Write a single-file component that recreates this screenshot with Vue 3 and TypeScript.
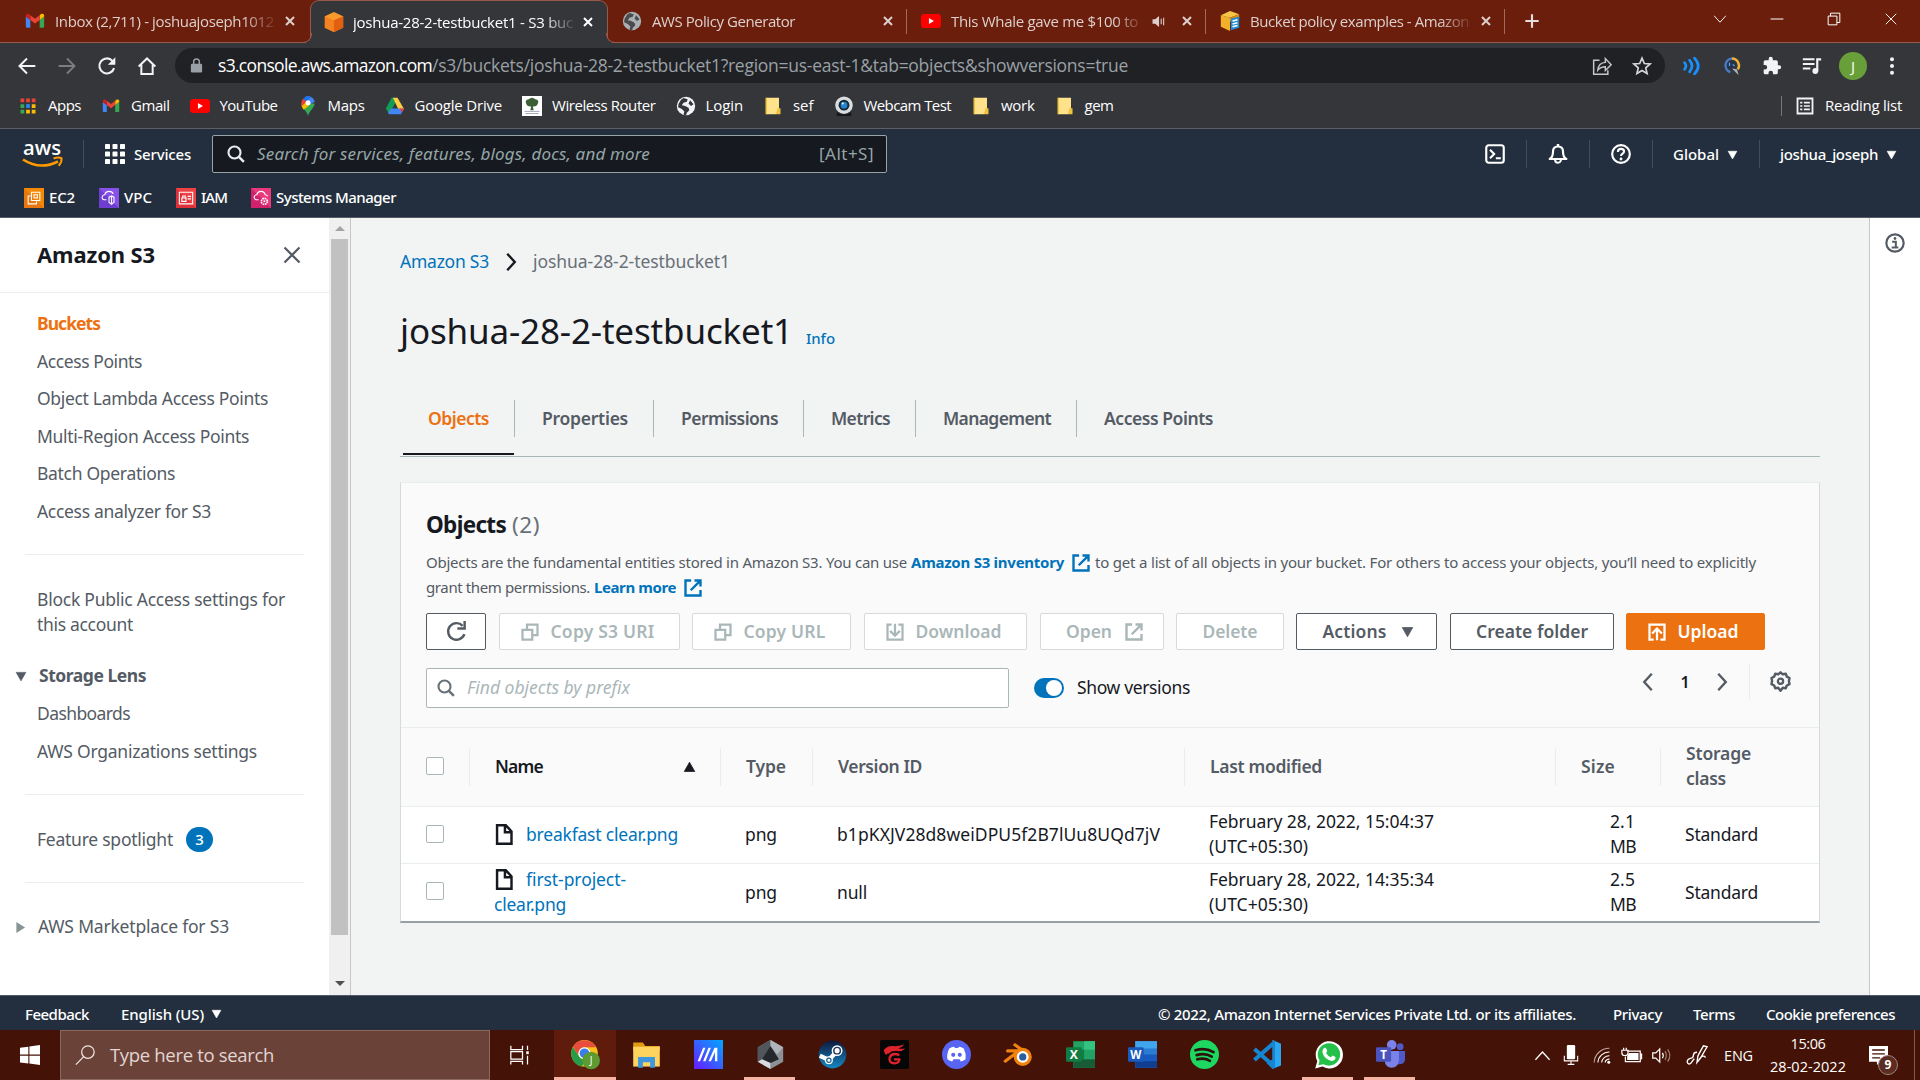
<script setup lang="ts">
import type { Directive } from 'vue'

/* Tracks a label so that it occupies the given width in pixels. */
const vFit: Directive<HTMLElement, number> = {
  mounted(el, { value }) {
    const natural = el.getBoundingClientRect().width
    const count = (el.textContent ?? '').length || 1
    el.style.letterSpacing = `${(value - natural) / count}px`
  },
}

interface Label {
  text: string
  w: number
}
interface IconLabel extends Label {
  icon: string
}

const gmail =
  '<path fill="#4285f4" d="M2 20h4.4V10.500L1 6.500V18.600Q1 20 2 20z"/><path fill="#34a853" d="M17.600 20H22q1-.2 1-1.400V6.500l-5.400 4z"/><path fill="#fbbc04" d="M17.600 5v5.800L23 6.700V5.500c0-2-2.200-2.900-3.700-1.800z"/><path fill="#ea4335" d="M6.400 10.800V5L12 9.200 17.600 5v5.800L12 15z"/><path fill="#c5221f" d="M1 5.500v1.200l5.400 4.100V5L4.700 3.700C3.200 2.600 1 3.500 1 5.500z"/>'
const youtube =
  '<rect x="0" y="3.500" width="24" height="17" rx="4" fill="#f00"/><path d="M9.500 8.500v7l6-3.500z" fill="#fff"/>'
const globe = (c: string, land: string) =>
  `<circle cx="12" cy="12" r="11" fill="${c}"/><path fill="${land}" d="M9 2.500l5 1.500-1 3-4 1-2 3 4 1 4 2 1 3-3 3-1 3.500-3-1 1-4-3-3-4.500-2 .5-4 3-5zM17 5l4 5-3 2-3-3z"/>`
const folder =
  '<path fill="#ffe28a" d="M3 1h17v19l-4 3H3z"/><path fill="#f0c33c" d="M2 1h2v22H2zM18 15h4v8h-6z"/>'

const icons: Record<string, string> = {
  gmail,
  youtube,
  folder,
  globeGrey: globe('#a9b0b5', '#4c4a4b'),
  globeWhite: globe('#f1f3f4', '#35363a'),
  cube: '<path fill="#fa9a2d" d="M12 0l11 5v14l-11 5-11-5V5z"/><path fill="#f58220" d="M1 5l11 5v14L1 19z"/><path fill="#e05f10" d="M23 5l-11 5v14l11-5z"/>',
  docs: '<path fill="#f3b02a" d="M1 5l11 3v16L1 19z"/><path fill="#f8c646" d="M12 0l11 4-11 4L1 5z"/><path fill="#d98b13" d="M12 8l11-4v5l-11 4z"/><path fill="#1d8ed6" d="M13 9l10-2v13l-10 3z"/><path d="M15 12l6-1.500M15 15.500l6-1.500M15 19l6-1.500" stroke="#fff" stroke-width="1.800"/>',
  x: '<path d="M4 4l16 16M20 4L4 20" stroke="currentColor" stroke-width="4" fill="none"/>',
  thinX: '<path d="M3 3l18 18M21 3L3 21" stroke="currentColor" stroke-width="1.600" fill="none"/>',
  sideX: '<path d="M2 2l20 20M22 2L2 22" stroke="#545b64" stroke-width="3" fill="none"/>',
  speaker: '<path fill="#ddd0cd" d="M1 8h5l7-6v20l-7-6H1z"/><path d="M17 7v10M21.500 5v14" stroke="#ddd0cd" stroke-width="2"/>',
  plus: '<path d="M12 2v20M2 12h20" stroke="#e7dedb" stroke-width="3.200"/>',
  down: '<path d="M2 6.500l10 11 10-11" stroke="currentColor" stroke-width="1.600" fill="none"/>',
  minus: '<path d="M1 12h22" stroke="#fff" stroke-width="1.700"/>',
  restore: '<path d="M2 7h15v15H2zM6 7V2h16v16h-5" stroke="#fff" stroke-width="1.700" fill="none"/>',
  back: '<path d="M22 12H3M12 3l-9 9 9 9" stroke="#f1f3f4" stroke-width="2.400" fill="none"/>',
  forward: '<path d="M2 12h19M12 3l9 9-9 9" stroke="#7d7e81" stroke-width="2.200" fill="none"/>',
  reload: '<path d="M20.500 14.500A9 9 0 1 1 18.500 5.800" stroke="#f1f3f4" stroke-width="2.500" fill="none"/><path d="M22 1.500v9h-9z" fill="#f1f3f4"/>',
  home: '<path d="M2 12.500L12 3l10 9.500M5.200 10.500v11h13.600v-11" stroke="#f1f3f4" stroke-width="2.400" fill="none"/>',
  lock: '<rect x="3" y="9" width="18" height="14" rx="2" fill="#9aa0a6"/><path d="M7.500 10V6a4.500 4.500 0 0 1 9 0v4" stroke="#9aa0a6" stroke-width="2.400" fill="none"/>',
  share: '<path d="M9 5H2v17h17v-5" stroke="#c4c7ca" stroke-width="1.800" fill="none"/><path d="M7 17c.5-6 4-9 9-9.300V3l7 7.500-7 7v-4.700c-4 0-6.500 1-9 4.200z" stroke="#c4c7ca" stroke-width="1.700" fill="none"/>',
  star: '<path d="M12 2.500l2.800 6.500 7 .6-5.300 4.600 1.600 6.900L12 17.400l-6.100 3.700 1.600-6.900-5.300-4.600 7-.6z" stroke="#d5d7da" stroke-width="2" fill="none"/>',
  waves: '<path d="M3 8q3.500 4 0 8M9 5q6 7 0 14M15 2.500q9 9.500 0 19" stroke="#1a90ff" stroke-width="3.200" fill="none" stroke-linecap="round"/>',
  quill: '<path d="M12 3a8.500 8.500 0 0 0-2 16.500" stroke="#4779c4" stroke-width="3" fill="none"/><path d="M12 3a8.500 8.500 0 0 1 7 13" stroke="#f0b236" stroke-width="3" fill="none"/><circle cx="11.500" cy="11" r="5.500" fill="#263449"/><path d="M9 8v4M13 10l2 2" stroke="#5aa2ff" stroke-width="1.500"/><path d="M12 15l8 8-2-7z" fill="#a9b0b5"/>',
  puzzle: '<path fill="#f1f3f4" d="M20.500 11H19V7a2 2 0 0 0-2-2h-4V3.500a2.500 2.500 0 0 0-5 0V5H4a2 2 0 0 0-2 2v3.800h1.500a2.700 2.700 0 0 1 0 5.400H2V20a2 2 0 0 0 2 2h3.800v-1.500a2.700 2.700 0 0 1 5.400 0V22H17a2 2 0 0 0 2-2v-4h1.500a2.500 2.500 0 0 0 0-5z"/>',
  playlist: '<path d="M1 4h14M1 9.500h14M1 15h9" stroke="#f1f3f4" stroke-width="2.400"/><circle cx="16" cy="18" r="3.500" fill="#f1f3f4"/><path d="M18.300 18V4H23" stroke="#f1f3f4" stroke-width="2.600" fill="none"/>',
  dots: '<circle cx="12" cy="4" r="2.400" fill="#f1f3f4"/><circle cx="12" cy="12" r="2.400" fill="#f1f3f4"/><circle cx="12" cy="20" r="2.400" fill="#f1f3f4"/>',
  apps: '<path fill="#ea4335" d="M2 2h5v5H2zM9.500 2h5v5h-5zM17 2h5v5h-5z"/><path fill="#34a853" d="M2 9.500h5v5H2zM2 17h5v5H2z"/><path fill="#2f87f5" d="M9.500 9.500h5v5h-5z"/><path fill="#fbbc04" d="M17 9.500h5v5h-5zM9.500 17h5v5h-5zM17 17h5v5h-5z"/>',
  maps: '<path fill="#34a853" d="M12 24C11 18 4.500 15 4 9h16c-.5 6-7 9-8 15z"/><path fill="#fbbc04" d="M4.300 11L9 6l6 4-8 6.500C5.500 14.800 4.500 13 4.300 11z"/><path fill="#4285f4" d="M9 .8C14-1 19 2 20 7l-7 4-3-5z"/><path fill="#1a73e8" d="M9 .8C12 0 14 0 15.500 1L10 7 6 3.500z"/><path fill="#ea4335" d="M6 3.300L10.500 7 4.500 12C3.500 9 4 5.500 6 3.300z"/><circle cx="12" cy="8" r="3" fill="#fff"/>',
  drive: '<path fill="#0f9d58" d="M8 2h4l2 3.500-9 16L1 15z"/><path fill="#ffcd40" d="M9.500 2H15l8 14h-7z"/><path fill="#4285f4" d="M7.500 15H23l-4 7H5l-1.500-2z"/><path fill="#ea4335" d="M17 15h6l-2.500 4.500z"/>',
  tree: '<path fill="#fff" d="M0 0h24v24H0z"/><path fill="#3d5f34" d="M5 9q-2-4 3-5 4-4 8 0 5 1 3 5-1 4-6 3.500l1 4.500h-4l1-4.500Q6 13 5 9z"/><path d="M3 18.500h18M4 21h16" stroke="#aab" stroke-width="1.200"/>',
  webcam: '<path fill="#17191b" d="M3 20h18v4H3z"/><circle cx="12" cy="11" r="10.500" fill="#d9dde0"/><circle cx="12" cy="11" r="6.500" fill="#1a2733"/><circle cx="12" cy="11" r="4" fill="#2186cf"/><circle cx="10.500" cy="9" r="1.200" fill="#fff"/>',
  reading: '<path d="M2 2h20v20H2z" stroke="#f1f3f4" stroke-width="2.400" fill="none"/><path d="M5.500 7.500h3M5.500 12h3M5.500 16.500h3M10.500 7.500h8M10.500 12h8M10.500 16.500h8" stroke="#f1f3f4" stroke-width="2.200"/>',
  grid: '<path fill="#fff" d="M1 0h4q1 0 1 1v4q0 1-1 1H1Q0 6 0 5V1q0-1 1-1zM10 0h4q1 0 1 1v4q0 1-1 1h-4q-1 0-1-1V1q0-1 1-1zM19 0h4q1 0 1 1v4q0 1-1 1h-4q-1 0-1-1V1q0-1 1-1zM1 9h4q1 0 1 1v4q0 1-1 1H1q-1 0-1-1v-4q0-1 1-1zM10 9h4q1 0 1 1v4q0 1-1 1h-4q-1 0-1-1v-4q0-1 1-1zM19 9h4q1 0 1 1v4q0 1-1 1h-4q-1 0-1-1v-4q0-1 1-1zM1 18h4q1 0 1 1v4q0 1-1 1H1q-1 0-1-1v-4q0-1 1-1zM10 18h4q1 0 1 1v4q0 1-1 1h-4q-1 0-1-1v-4q0-1 1-1zM19 18h4q1 0 1 1v4q0 1-1 1h-4q-1 0-1-1v-4q0-1 1-1z"/>',
  search: '<circle cx="10" cy="10" r="8" stroke="currentColor" stroke-width="2.800" fill="none"/><path d="M15.500 15.500l7 7" stroke="currentColor" stroke-width="3.200"/>',
  shell: '<rect x="1.500" y="1.500" width="21" height="21" rx="3" stroke="#fff" stroke-width="2.600" fill="none"/><path d="M6 7l5 5-5 5M13 17h6" stroke="#fff" stroke-width="2.500" fill="none"/>',
  bell: '<path d="M2 18q4-2 4-9 0-6 6-6t6 6q0 7 4 9z" stroke="#fff" stroke-width="2.600" fill="none" stroke-linejoin="round"/><path d="M12 0v3" stroke="#fff" stroke-width="3"/><path d="M8.500 19a3.500 3.500 0 0 0 7 0" stroke="#fff" stroke-width="2.400" fill="none"/>',
  help: '<circle cx="12" cy="12" r="10.600" stroke="#fff" stroke-width="2.600" fill="none"/><path d="M8.300 9.500q0-3.700 3.700-3.700t3.700 3.200c0 2.700-3.700 2.500-3.700 5.500" stroke="#fff" stroke-width="2.500" fill="none"/><circle cx="12" cy="18" r="1.700" fill="#fff"/>',
  ec2: '<path fill="#e8770f" d="M0 0h24v24H0z"/><path fill="#ff9900" opacity=".5" d="M24 0v24L0 0z"/><path d="M9 5h10v10H9zM8 9.500H5V19h10v-3M12 8h4v4h-4z" stroke="#fff" stroke-width="1.300" fill="none"/>',
  vpc: '<path fill="#6f3ed0" d="M0 0h24v24H0z"/><path fill="#a166ff" opacity=".5" d="M24 0v24L0 0z"/><path d="M9 14H6q-3-1-2-4 1-2 3-2 1-4 5-4 4 0 5 3M12 11l3-1.500 3 1.500v6l-3 2.500-3-2.500zM15 10v8" stroke="#fff" stroke-width="1.300" fill="none"/>',
  iam: '<path fill="#dd3038" d="M0 0h24v24H0z"/><path fill="#ff5252" opacity=".5" d="M24 0v24L0 0z"/><path d="M4 5h16v14H4zM7 12h5v4H7zM8 12V9.500h3V12M14 10h4M14 13h4" stroke="#fff" stroke-width="1.300" fill="none"/>',
  ssm: '<path fill="#d2226d" d="M0 0h24v24H0z"/><path fill="#ff4f8b" opacity=".5" d="M24 0v24L0 0z"/><path d="M9 14H6q-3-1-2-4 1-2 3-2 1-4 5-4 4 0 5 4 2 0 3 2" stroke="#fff" stroke-width="1.300" fill="none"/><circle cx="16" cy="16" r="3.600" stroke="#fff" stroke-width="2" stroke-dasharray="2 .8" fill="none"/><circle cx="16" cy="16" r="1.200" fill="#fff"/>',
  tri: '<path fill="currentColor" stroke="currentColor" stroke-width="1.500" stroke-linejoin="round" d="M1.500 3h21L12 21.500z"/>',
  triUp: '<path fill="currentColor" stroke="currentColor" stroke-width="1.500" stroke-linejoin="round" d="M1.500 21h21L12 2.500z"/>',
  triRight: '<path fill="currentColor" d="M3 0l19 12L3 24z"/>',
  chevR: '<path d="M7 1l10 11L7 23" stroke="currentColor" stroke-width="3.200" fill="none"/>',
  chevL: '<path d="M17 1L7 12l10 11" stroke="currentColor" stroke-width="3.200" fill="none"/>',
  external: '<path d="M9.500 2H2v20h20v-7.500M14 2h8v8M21.500 2.500L9 15" stroke="currentColor" stroke-width="3.200" fill="none"/>',
  refresh: '<path d="M21 15a9.500 9.500 0 1 1-2-9.500" stroke="#545b64" stroke-width="2.800" fill="none"/><path d="M21.300 0v8.500H13" stroke="#545b64" stroke-width="2.800" fill="none"/>',
  copy: '<path d="M2 9h13v13H2zM8 8V2h14v14h-6" stroke="currentColor" stroke-width="3" fill="none"/>',
  download: '<path d="M7.500 2H2v20h20V2h-5.500M12 1v15M5.500 10.500L12 17l6.500-6.500" stroke="currentColor" stroke-width="3" fill="none"/>',
  upload: '<path d="M7.500 22H2V2h20v20h-5.500M12 23V8M5.500 14L12 7.500l6.500 6.500" stroke="currentColor" stroke-width="3" fill="none"/>',
  gear: '<path d="M12 1.500l2.600 2.300 3.400-.6 1.200 3.200 3.100 1.600-.7 3.500.7 3.500-3.100 1.600-1.200 3.200-3.400-.6L12 22.500l-2.600-3.300-3.400.6-1.200-3.200-3.100-1.600.7-3.500-.7-3.500 3.100-1.600L6 3.200l3.400.6z" stroke="#545b64" stroke-width="2.800" stroke-linejoin="round" fill="none"/><circle cx="12" cy="11.800" r="3" stroke="#545b64" stroke-width="2.600" fill="none"/>',
  file: '<path d="M3.500 1.500h10l6.500 7v14H3.500zM12.500 1.500v8H20" stroke="#16191f" stroke-width="2.800" fill="none"/>',
  info: '<circle cx="12" cy="12" r="10.400" stroke="#545b64" stroke-width="2.600" fill="none"/><path d="M8.500 10.500H13V17M8 17.500h8" stroke="#545b64" stroke-width="2.400" fill="none"/><circle cx="12" cy="6.600" r="1.700" fill="#545b64"/>',
  windows: '<path fill="#fff" d="M0 3.300L10 2v9.500H0zM11.300 1.800L24 0v11.500H11.300zM0 12.800h10v9.500L0 21zM11.300 12.800H24V24l-12.700-1.700z"/>',
  taskSearch: '<circle cx="15.500" cy="8.500" r="7.500" stroke="#f0e5e2" stroke-width="1.500" fill="none"/><path d="M10.500 14L1 23.500" stroke="#f0e5e2" stroke-width="1.500"/>',
  taskView: '<path d="M1 1v4.500h14V1M1 8h14v9H1zM1 23.500V19.500h14v4M21 1v5M21 13v10.500" stroke="#fff" stroke-width="1.500" fill="none"/><path fill="#fff" d="M19.500 7.500h3v3.500h-3z"/>',
  chrome: '<circle cx="12" cy="11" r="11" fill="#fbc116"/><path fill="#e94c3d" d="M2.500 5.500A11 11 0 0 1 21.600 6H12a5 5 0 0 0-4.600 3.200L6.500 12z"/><path fill="#269b4a" d="M2.400 5.700l5 7.800A5 5 0 0 0 12.500 16L10 22A11 11 0 0 1 2.400 5.700z"/><circle cx="12" cy="11" r="5" fill="#fff"/><circle cx="12" cy="11" r="4" fill="#3b7ded"/><circle cx="17.500" cy="17" r="7.300" fill="#5d9a31"/><text x="17.500" y="20" font-size="8.500" fill="#fff" text-anchor="middle" font-family="Open Sans, sans-serif">J</text>',
  explorer: '<path fill="#e29a10" d="M1 2h8l2 3h12v4H1z"/><path fill="#ffd45e" d="M1 5.500h22V22H1z"/><path fill="#3f97de" d="M5 23v-9h14v9h-4v-4.500H9V23z"/>',
  asus: '<defs><linearGradient id="asus" x1="0" y1="1" x2="1" y2="0"><stop offset="0" stop-color="#6a1bff"/><stop offset="1" stop-color="#00a8ff"/></linearGradient></defs><path fill="url(#asus)" d="M0 0h24v24H0z"/><path fill="#fff" d="M3 17.500L7.500 6.500h2L5 17.500zM7.500 17.500L12 6.500h2L9.500 17.500z"/><path fill="#fff" d="M12 17.500l5-11h2.300v11h-1.900v-7.500l-3.400 7.500z"/>',
  hex: '<path fill="#8b9197" d="M12 0l10.500 6v12L12 24 1.500 18V6z"/><path fill="#51565c" d="M12 0v24L1.500 18V6z"/><path fill="#24272b" d="M12 5l7 11-7 3-7-3z"/><path fill="#aeb4ba" d="M12 0l10.500 6-5 6L12 5z"/><path fill="#d8dce0" d="M5 16l7 3v5L1.500 18z"/>',
  steam: '<defs><linearGradient id="steam" x1="0" y1="0" x2="0" y2="1"><stop offset="0" stop-color="#10183c"/><stop offset="1" stop-color="#1489c4"/></linearGradient></defs><circle cx="12" cy="12" r="11.500" fill="url(#steam)"/><path d="M1.500 13l7.500 3.500L15 10" stroke="#fff" stroke-width="3.600" fill="none"/><circle cx="15.800" cy="8.800" r="4.500" fill="#fff"/><circle cx="15.800" cy="8.800" r="2.700" fill="#fff" stroke="#1b3561" stroke-width="1.200"/><circle cx="9" cy="16.800" r="3.300" fill="#fff"/><circle cx="9" cy="16.800" r="1.800" stroke="#17608f" fill="none"/>',
  garena: '<rect width="24" height="24" rx="1.500" fill="#060606"/><path fill="#e0222b" d="M3 8.500q3-4 8-3.500 4 .5 9-1.500-2 3-5 3.300 2.500.8 6 .2-2.500 2.500-6.500 2.200Q9 8.500 8 11 5.500 11 5 12.500 3.500 10.500 3 8.500z"/><path d="M16 12.500q-6-2.500-8 2-1 4.500 4 4.800 4 0 4-3.300h-4.500" stroke="#e0222b" stroke-width="1.900" fill="none"/>',
  discord: '<circle cx="12" cy="12" r="12" fill="#5865f2"/><path fill="#fff" d="M6 7q2-1.500 4-1.500l.7 1.200h2.600l.7-1.200q2 0 4 1.500 2.300 4.500 1.500 9-2 1.700-4 1.800l-1-1.800h-5l-1 1.800q-2-.1-4-1.800Q3.700 11.500 6 7z"/><circle cx="9.300" cy="12.300" r="1.700" fill="#5865f2"/><circle cx="14.700" cy="12.300" r="1.700" fill="#5865f2"/>',
  blender: '<path d="M3 9h12M1 17.500l10-7.500M9 4l7 5" stroke="#f0820f" stroke-width="2.600" stroke-linecap="round" fill="none"/><circle cx="15.500" cy="14" r="7.500" fill="#f0820f"/><circle cx="15.500" cy="14" r="4.900" fill="#fff"/><circle cx="15.500" cy="14" r="3" fill="#2a5f9e"/>',
  excel: '<path fill="#21a366" d="M6 1h18v22H6z"/><path fill="#33c481" d="M15 1h9v7h-9z"/><path fill="#107c41" d="M6 8h9v8H6z"/><path fill="#185c37" d="M6 16h18v7H6z"/><rect x="0" y="6" width="13" height="12" rx="1" fill="#107c41"/><text x="6.500" y="15.500" font-size="10" font-weight="700" fill="#fff" text-anchor="middle" font-family="Open Sans, sans-serif">X</text>',
  word: '<path fill="#2b7cd3" d="M6 1h18v22H6z"/><path fill="#41a5ee" d="M6 1h18v6H6z"/><path fill="#185abd" d="M6 12h18v6H6z"/><path fill="#103f91" d="M6 17.500h18V23H6z"/><rect x="0" y="6" width="13" height="12" rx="1" fill="#185abd"/><text x="6.500" y="15.500" font-size="9.500" font-weight="700" fill="#fff" text-anchor="middle" font-family="Open Sans, sans-serif">W</text>',
  spotify: '<circle cx="12" cy="12" r="12" fill="#1ed760"/><path d="M4.500 8.500q8-2.500 15 1.500M5.500 12.500q7-2 12.500 1.300M6 16q6-1.500 10.500 1.200" stroke="#2c120a" stroke-width="2.200" stroke-linecap="round" fill="none"/>',
  vscode: '<path d="M17.500 3L2 16.500M2 7.500L17.500 21" stroke="#1685d1" stroke-width="3.400"/><path fill="#2aa7f0" d="M17 0l7 3v18l-7 3z"/><path fill="#1685d1" d="M17 0l2 1v22l-2 1-5-5 5-3z"/>',
  whatsapp: '<path fill="#fff" d="M1 23.500l1.700-6A11.300 11.300 0 1 1 7 22z"/><path fill="#25c04a" d="M3.600 20.800l1-3.800a9.300 9.300 0 1 1 3.200 3z"/><path fill="#fff" d="M8.700 6.500q1-.5 1.500.7l.8 2-1 1.500q1.300 2.500 4 3.500l1.300-1.400 2.500 1.200q.2 3-3 3.300Q9 16.500 7 10.500 6.800 7.500 8.700 6.500z"/>',
  teams: '<circle cx="13" cy="4" r="4" fill="#7b83eb"/><circle cx="20" cy="5.500" r="2.800" fill="#5059c9"/><path fill="#5059c9" d="M17 9h7v7q0 4-4 4h-3z"/><path fill="#7b83eb" d="M7 9h12v8q-1 6-6 6t-6-6z"/><rect x="0" y="6" width="12.500" height="12" rx="1" fill="#4b53bc"/><text x="6.200" y="15.500" font-size="9.500" font-weight="700" fill="#fff" text-anchor="middle" font-family="Open Sans, sans-serif">T</text>',
  trayUp: '<path d="M2 18L12 7l10 11" stroke="#fff" stroke-width="1.800" fill="none"/>',
  mic: '<rect x="7" y="0" width="10" height="17" rx="1.500" fill="#fff"/><path d="M4 13v6h16v-6M12 19v4M8 23.200h8" stroke="#fff" stroke-width="1.300" fill="none"/>',
  wifi: '<path d="M1.500 22A20 20 0 0 1 22 3" stroke="#bfa39c" stroke-width="1.400" fill="none"/><path d="M6.500 22A15 15 0 0 1 22 8M11.500 22A10 10 0 0 1 22 13M16 22a6 6 0 0 1 6-4.500" stroke="#fff" stroke-width="1.400" fill="none"/><circle cx="21" cy="21.500" r="2" fill="#fff"/>',
  battery: '<path d="M7 7h15v12H5v-6M22 10.500h1.500v5H22M1 6h7v3q0 3-3.500 3T1 9zM3 3v3M6 3v3" stroke="#fff" stroke-width="1.400" fill="none"/><path d="M9 9h11v8H7v-4z" fill="#fff"/>',
  volume: '<path d="M2 9h3.500L10 4.500v15L5.500 15H2z" stroke="#fff" stroke-width="1.400" fill="none"/><path d="M13 9q2 3 0 6" stroke="#fff" stroke-width="1.400" fill="none"/><path d="M16 7q3 5 0 10M19 5q5 7 0 14" stroke="#a3837b" stroke-width="1.400" fill="none"/>',
  pen: '<path d="M14 11L19 2l4 1-7 12-4 5 1-7zM12 9q-4 0-4 4 0 2-4 3-4 2-2 5 2 2 4-1l3-4M16 14q5-2 5 1" stroke="#fff" stroke-width="1.500" fill="none"/>',
  notice: '<path fill="#fff" d="M0 0h24v20h-9l-5 4v-4H0z"/><path d="M4 5h16M4 10h16M4 15h10" stroke="#441206" stroke-width="1.700"/>',
}

const tabs = [
  { icon: 'gmail', text: 'Inbox (2,711) - joshuajoseph1012', w: 219, cls: 'first' },
  { icon: 'cube', text: 'joshua-28-2-testbucket1 - S3 buc', w: 220, cls: 'active' },
  { icon: 'globeGrey', text: 'AWS Policy Generator', w: 143, cls: 'ruled' },
  { icon: 'youtube', text: 'This Whale gave me $100 to', w: 187, cls: 'ruled', sound: true },
  { icon: 'docs', text: 'Bucket policy examples - Amazon', w: 219, cls: 'ruled' },
]

const bookmarks: IconLabel[] = [
  { icon: 'apps', text: 'Apps', w: 33 },
  { icon: 'gmail', text: 'Gmail', w: 38.5 },
  { icon: 'youtube', text: 'YouTube', w: 58 },
  { icon: 'maps', text: 'Maps', w: 37 },
  { icon: 'drive', text: 'Google Drive', w: 87.5 },
  { icon: 'tree', text: 'Wireless Router', w: 103.5 },
  { icon: 'globeWhite', text: 'Login', w: 37.5 },
  { icon: 'folder', text: 'sef', w: 20.5 },
  { icon: 'webcam', text: 'Webcam Test', w: 87.5 },
  { icon: 'folder', text: 'work', w: 33.5 },
  { icon: 'folder', text: 'gem', w: 29 },
]

const favorites: IconLabel[] = [
  { icon: 'ec2', text: 'EC2', w: 26 },
  { icon: 'vpc', text: 'VPC', w: 28 },
  { icon: 'iam', text: 'IAM', w: 26 },
  { icon: 'ssm', text: 'Systems Manager', w: 120 },
]

const links: Label[] = [
  { text: 'Buckets', w: 63 },
  { text: 'Access Points', w: 105 },
  { text: 'Object Lambda Access Points', w: 231 },
  { text: 'Multi-Region Access Points', w: 212 },
  { text: 'Batch Operations', w: 138 },
  { text: 'Access analyzer for S3', w: 174 },
]

const pageTabs: Label[] = [
  { text: 'Objects', w: 61 },
  { text: 'Properties', w: 86 },
  { text: 'Permissions', w: 97 },
  { text: 'Metrics', w: 59 },
  { text: 'Management', w: 108 },
  { text: 'Access Points', w: 109 },
]

const rows = [
  {
    name: [{ text: 'breakfast clear.png', w: 152 }],
    version: { text: 'b1pKXJV28d8weiDPU5f2B7lUu8UQd7jV', w: 323 },
    date: 'February 28, 2022, 15:04:37',
    size: '2.1',
  },
  {
    name: [
      { text: 'first-project-', w: 100 },
      { text: 'clear.png', w: 72 },
    ],
    version: { text: 'null', w: 30 },
    date: 'February 28, 2022, 14:35:34',
    size: '2.5',
  },
]

const apps = [
  { icon: 'chrome', state: 'focused' },
  { icon: 'explorer', state: '' },
  { icon: 'asus', state: '' },
  { icon: 'hex', state: 'open' },
  { icon: 'steam', state: '' },
  { icon: 'garena', state: '' },
  { icon: 'discord', state: '' },
  { icon: 'blender', state: '' },
  { icon: 'excel', state: '' },
  { icon: 'word', state: '' },
  { icon: 'spotify', state: '' },
  { icon: 'vscode', state: '' },
  { icon: 'whatsapp', state: 'open' },
  { icon: 'teams', state: 'open' },
]
</script>

<template>
  <div class="screen">
    <header class="browser">
      <div class="strip">
        <div v-for="t in tabs" :key="t.text" class="tab" :class="t.cls">
          <svg class="i20" viewBox="0 0 24 24" v-html="icons[t.icon]" />
          <div class="title"><span v-fit="t.w" class="t">{{ t.text }}</span></div>
          <svg v-if="t.sound" class="sound" viewBox="0 0 24 24" v-html="icons.speaker" />
          <svg class="close" viewBox="0 0 24 24" v-html="icons.x" />
        </div>
        <svg class="plus" viewBox="0 0 24 24" v-html="icons.plus" />
        <div class="window">
          <svg viewBox="0 0 24 24" v-html="icons.down" />
          <svg viewBox="0 0 24 24" v-html="icons.minus" />
          <svg viewBox="0 0 24 24" v-html="icons.restore" />
          <svg viewBox="0 0 24 24" v-html="icons.thinX" />
        </div>
      </div>

      <div class="toolbar">
        <div class="nav">
          <svg v-for="n in ['back', 'forward', 'reload', 'home']" :key="n" class="i20" viewBox="0 0 24 24" v-html="icons[n]" />
        </div>
        <div class="omnibox">
          <svg class="lock" viewBox="0 0 24 24" v-html="icons.lock" />
          <span v-fit="214" class="t">s3.console.aws.amazon.com</span>
          <span v-fit="696" class="t path">/s3/buckets/joshua-28-2-testbucket1?region=us-east-1&amp;tab=objects&amp;showversions=true</span>
          <svg class="i20 share" viewBox="0 0 24 24" v-html="icons.share" />
          <svg class="i20" viewBox="0 0 24 24" v-html="icons.star" />
        </div>
        <div class="extensions">
          <svg v-for="n in ['waves', 'quill', 'puzzle', 'playlist']" :key="n" class="i20" viewBox="0 0 24 24" v-html="icons[n]" />
        </div>
        <div class="avatar">J</div>
        <svg class="i20" viewBox="0 0 24 24" v-html="icons.dots" />
      </div>

      <div class="bookmarks">
        <div v-for="(b, i) in bookmarks" :key="i" class="bookmark">
          <svg class="i20" :class="{ small: ['apps', 'folder', 'gmail'].includes(b.icon) }" viewBox="0 0 24 24" v-html="icons[b.icon]" />
          <span v-fit="b.w" class="t">{{ b.text }}</span>
        </div>
        <div class="reading">
          <svg viewBox="0 0 24 24" v-html="icons.reading" />
          <span v-fit="77" class="t">Reading list</span>
        </div>
      </div>
    </header>

    <header class="aws">
      <div class="global">
        <svg class="logo" viewBox="0 0 40 30">
          <text x="0" y="15.500" textLength="38" lengthAdjust="spacingAndGlyphs" font-size="19" fill="#fff">aws</text>
          <path d="M0 20.500q17 11 35 2" stroke="#ff9900" stroke-width="2.600" fill="none" />
          <path d="M30.500 19.500q5-1.800 8-.3.600 3.800-2.800 7.500" stroke="#ff9900" stroke-width="2" fill="none" />
        </svg>
        <i class="rule" />
        <svg class="i20" viewBox="0 0 24 24" v-html="icons.grid" />
        <span v-fit="57" class="t services">Services</span>
        <div class="search">
          <svg viewBox="0 0 24 24" v-html="icons.search" />
          <em v-fit="393" class="t">Search for services, features, blogs, docs, and more</em>
          <span v-fit="55" class="t">[Alt+S]</span>
        </div>
        <div class="account">
          <svg class="i20" viewBox="0 0 24 24" v-html="icons.shell" />
          <i class="rule" />
          <svg class="i20" viewBox="0 0 24 24" v-html="icons.bell" />
          <i class="rule" />
          <svg class="i20" viewBox="0 0 24 24" v-html="icons.help" />
          <i class="rule" />
          <div class="menu">
            <span v-fit="46" class="t">Global</span>
            <svg viewBox="0 0 24 24" v-html="icons.tri" />
          </div>
          <i class="rule" />
          <div class="menu">
            <span v-fit="98" class="t">joshua_joseph</span>
            <svg viewBox="0 0 24 24" v-html="icons.tri" />
          </div>
        </div>
      </div>
      <div class="favorites">
        <div v-for="f in favorites" :key="f.text" class="favorite">
          <svg class="i20" viewBox="0 0 24 24" v-html="icons[f.icon]" />
          <span v-fit="f.w" class="t">{{ f.text }}</span>
        </div>
      </div>
    </header>

    <div class="body">
      <aside class="side">
        <div class="sidehead">
          <span v-fit="118" class="t">Amazon S3</span>
          <svg viewBox="0 0 24 24" v-html="icons.sideX" />
        </div>
        <nav class="sidenav">
          <a v-for="(l, i) in links" :key="l.text" :class="{ current: i === 0 }"><span v-fit="l.w" class="t">{{ l.text }}</span></a>
          <hr />
          <div class="block">
            <span v-fit="248" class="t">Block Public Access settings for</span>
            <span v-fit="96" class="t">this account</span>
          </div>
          <div class="group">
            <svg viewBox="0 0 24 24" v-html="icons.tri" />
            <b v-fit="107" class="t">Storage Lens</b>
          </div>
          <a><span v-fit="93" class="t">Dashboards</span></a>
          <a><span v-fit="220" class="t">AWS Organizations settings</span></a>
          <hr />
          <div class="spot">
            <span v-fit="136" class="t">Feature spotlight</span>
            <span class="badge">3</span>
          </div>
          <hr />
          <div class="group closed">
            <svg viewBox="0 0 24 24" v-html="icons.triRight" />
            <span v-fit="191" class="t">AWS Marketplace for S3</span>
          </div>
        </nav>
      </aside>
      <div class="scrollbar">
        <i class="up" />
        <i class="thumb" />
        <i class="dn" />
      </div>

      <main class="main">
        <div class="crumbs">
          <a v-fit="89" class="t">Amazon S3</a>
          <svg viewBox="0 0 24 24" v-html="icons.chevR" />
          <span v-fit="197" class="t">joshua-28-2-testbucket1</span>
        </div>
        <h1>
          <span v-fit="393" class="t">joshua-28-2-testbucket1</span>
          <a v-fit="29" class="t">Info</a>
        </h1>
        <div class="pagetabs">
          <div v-for="(p, i) in pageTabs" :key="p.text" class="pagetab" :class="{ on: i === 0 }">
            <span v-fit="p.w" class="t">{{ p.text }}</span>
          </div>
        </div>

        <section class="card">
          <div class="cardhead">
            <h2><span v-fit="80" class="t">Objects</span> <span v-fit="28" class="t count">(2)</span></h2>
            <p>
              <span v-fit="481" class="t">Objects are the fundamental entities stored in Amazon S3. You can use</span>
              <a v-fit="153" class="t link">Amazon S3 inventory</a>
              <svg viewBox="0 0 24 24" v-html="icons.external" />
              <span v-fit="661" class="t">to get a list of all objects in your bucket. For others to access your objects, you’ll need to explicitly</span>
            </p>
            <p>
              <span v-fit="164" class="t">grant them permissions.</span>
              <a v-fit="82" class="t link">Learn more</a>
              <svg viewBox="0 0 24 24" v-html="icons.external" />
            </p>
            <div class="buttons">
              <button class="refresh"><svg viewBox="0 0 24 24" v-html="icons.refresh" /></button>
              <button class="off uri"><svg viewBox="0 0 24 24" v-html="icons.copy" /><span v-fit="104" class="t">Copy S3 URI</span></button>
              <button class="off url"><svg viewBox="0 0 24 24" v-html="icons.copy" /><span v-fit="82" class="t">Copy URL</span></button>
              <button class="off dl"><svg viewBox="0 0 24 24" v-html="icons.download" /><span v-fit="86" class="t">Download</span></button>
              <button class="off open"><span v-fit="46" class="t">Open</span><svg viewBox="0 0 24 24" v-html="icons.external" /></button>
              <button class="off del"><span v-fit="55" class="t">Delete</span></button>
              <button class="actions"><span v-fit="64" class="t">Actions</span><svg viewBox="0 0 24 24" v-html="icons.tri" /></button>
              <button class="create"><span v-fit="112" class="t">Create folder</span></button>
              <button class="upload"><svg viewBox="0 0 24 24" v-html="icons.upload" /><span v-fit="61" class="t">Upload</span></button>
            </div>
            <div class="filters">
              <div class="find">
                <svg viewBox="0 0 24 24" v-html="icons.search" />
                <em v-fit="163" class="t">Find objects by prefix</em>
              </div>
              <div class="toggle"><i /></div>
              <span v-fit="113" class="t">Show versions</span>
              <div class="pager">
                <svg viewBox="0 0 24 24" v-html="icons.chevL" />
                <b>1</b>
                <svg viewBox="0 0 24 24" v-html="icons.chevR" />
                <i />
                <svg class="gear" viewBox="0 0 24 24" v-html="icons.gear" />
              </div>
            </div>
          </div>

          <div class="row head">
            <div class="check"><i /></div>
            <div class="sorted"><span v-fit="48" class="t">Name</span><svg viewBox="0 0 24 24" v-html="icons.triUp" /></div>
            <div><span v-fit="40" class="t">Type</span></div>
            <div><span v-fit="84" class="t">Version ID</span></div>
            <div><span v-fit="112" class="t">Last modified</span></div>
            <div><span v-fit="34" class="t">Size</span></div>
            <div class="stack"><span v-fit="65" class="t">Storage</span><span v-fit="40" class="t">class</span></div>
          </div>
          <div v-for="r in rows" :key="r.date" class="row">
            <div class="check"><i /></div>
            <div class="stack name">
              <a v-for="(n, i) in r.name" :key="n.text">
                <svg v-if="i === 0" viewBox="0 0 24 24" v-html="icons.file" />
                <span v-fit="n.w" class="t">{{ n.text }}</span>
              </a>
            </div>
            <div><span v-fit="32" class="t">png</span></div>
            <div><span v-fit="r.version.w" class="t">{{ r.version.text }}</span></div>
            <div class="stack"><span v-fit="225" class="t">{{ r.date }}</span><span v-fit="99" class="t">(UTC+05:30)</span></div>
            <div class="stack size"><span v-fit="25" class="t">{{ r.size }}</span><span v-fit="26" class="t">MB</span></div>
            <div><span v-fit="73" class="t">Standard</span></div>
          </div>
        </section>
      </main>
      <aside class="help"><svg class="i20" viewBox="0 0 24 24" v-html="icons.info" /></aside>
    </div>

    <footer class="foot">
      <span v-fit="64" class="t">Feedback</span>
      <span v-fit="83" class="t lang">English (US)</span>
      <svg viewBox="0 0 24 24" v-html="icons.tri" />
      <div class="legal">
        <span v-fit="418" class="t">© 2022, Amazon Internet Services Private Ltd. or its affiliates.</span>
        <span v-fit="49" class="t">Privacy</span>
        <span v-fit="42" class="t">Terms</span>
        <span v-fit="129" class="t">Cookie preferences</span>
      </div>
    </footer>

    <div class="taskbar">
      <div class="start"><svg class="i20" viewBox="0 0 24 24" v-html="icons.windows" /></div>
      <div class="tasksearch">
        <svg class="i20" viewBox="0 0 24 24" v-html="icons.taskSearch" />
        <span v-fit="164" class="t">Type here to search</span>
      </div>
      <div class="view"><svg class="i20" viewBox="0 0 24 24" v-html="icons.taskView" /></div>
      <div class="apps">
        <div v-for="a in apps" :key="a.icon" class="app" :class="a.state">
          <svg viewBox="0 0 24 24" v-html="icons[a.icon]" />
        </div>
      </div>
      <div class="tray">
        <svg v-for="n in ['trayUp', 'mic', 'wifi', 'battery', 'volume', 'pen']" :key="n" viewBox="0 0 24 24" :class="n" v-html="icons[n]" />
        <span v-fit="29" class="t">ENG</span>
        <div class="clock"><span v-fit="35" class="t">15:06</span><span v-fit="76" class="t">28-02-2022</span></div>
        <div class="notice"><svg viewBox="0 0 24 24" v-html="icons.notice" /><b>9</b></div>
      </div>
    </div>
  </div>
</template>

<style>
body { margin: 0; overflow: hidden; }
</style>

<style scoped>
.screen { width: 1920px; height: 1080px; overflow: hidden; font-family: "Noto Sans", "Open Sans", sans-serif; color: #16191f; }
.screen * { box-sizing: border-box; }
svg { display: block; flex: none; overflow: visible; }
.t { display: inline-block; flex: none; white-space: nowrap; }
.aws .t, .body .t { transform: translate(-1px, -1px); }
.toolbar .t, .bookmarks .t, .foot .t, .tasksearch .t { transform: translateY(-1px); }
.i20 { width: 20px; height: 20px; }

/* Browser chrome */
.browser { height: 129px; background: #35363a; border-bottom: 1px solid #5f6063; font-family: "Open Sans", "Noto Sans", sans-serif; font-size: 15px; color: #fff; }
.strip { display: flex; align-items: center; height: 43px; background: #6c1e0c; border-bottom: 1px solid #98594b; }
.tab { display: flex; align-items: center; gap: 10px; width: 299px; height: 25px; flex: none; padding: 0 13px 0 14px; color: #ddd0cd; }
.tab.first { width: 310px; padding: 0 14px 0 25px; }
.tab.ruled { border-right: 1px solid #a3695c; padding-right: 12px; }
.tab.active { position: relative; width: 298px; height: 43px; margin-bottom: -1px; align-self: stretch; padding: 0 13px; gap: 9px; background: #35363a; border: 1px solid #98594b; border-bottom: 0; border-radius: 9px 9px 0 0; color: #fff; }
.tab.active::before, .tab.active::after { content: ""; position: absolute; bottom: 0; width: 9px; height: 9px; border-bottom: 1px solid #98594b; }
.tab.active::before { left: -9px; border-right: 1px solid #98594b; border-bottom-right-radius: 9px; box-shadow: 4px 4px 0 #35363a; }
.tab.active::after { right: -9px; border-left: 1px solid #98594b; border-bottom-left-radius: 9px; box-shadow: -4px 4px 0 #35363a; }
.title { flex: 1; -webkit-mask-image: linear-gradient(90deg, #000 86%, transparent 102%); mask-image: linear-gradient(90deg, #000 86%, transparent 102%); }
.sound { width: 13px; height: 13px; margin: 0 6px 0 1px; }
.close { width: 12px; height: 12px; }
.plus { width: 16px; height: 16px; margin-left: 19px; }
.window { display: flex; gap: 43px; margin: -5px 22px 0 auto; }
.window svg { width: 14px; height: 14px; }
.toolbar { display: flex; align-items: center; height: 45px; }
.nav { display: flex; gap: 20px; width: 175px; padding-left: 17px; }
.omnibox { display: flex; align-items: center; width: 1490px; height: 35px; border-radius: 18px; background: #202124; padding: 0 13px; font-size: 17.5px; }
.lock { width: 15px; height: 15px; margin: 0 14px 0 1px; }
.path { color: #9aa0a6; }
.share { margin: 0 20px 0 auto; }
.extensions { display: flex; gap: 20px; margin-left: 17px; }
.avatar { width: 28px; height: 28px; margin: 0 15px 0 17px; border-radius: 50%; background: #689f38; text-align: center; line-height: 28px; font-size: 15px; }
.bookmarks { display: flex; align-items: center; gap: 20px; height: 36px; padding: 0 18px; }
.bookmark { display: flex; align-items: center; gap: 10px; }
.small { padding: 1px; }
.reading { display: flex; align-items: center; gap: 11px; height: 20px; margin-left: auto; padding-left: 14px; border-left: 1px solid #75777a; }
.reading svg { width: 18px; height: 18px; }

/* Console header */
.aws { height: 89px; background: #232f3e; border-bottom: 1px solid #545b64; font-size: 15px; color: #fff; }
.global { display: flex; align-items: center; height: 50px; padding: 0 23px; }
.logo { width: 40px; height: 30px; font-family: "Open Sans", sans-serif; font-weight: 600; }
.rule { width: 1px; height: 28px; background: #414d5c; flex: none; }
.logo + .rule { margin: 0 21px 0 20px; }
.services { margin: 2px 20px 0 10px; font-weight: 500; }
.search { display: flex; align-items: center; width: 675px; height: 38px; border: 1px solid #95a5a6; border-radius: 2px; background: #161920; padding: 0 11px 0 14px; font-size: 17px; color: #95a5a6; }
.search svg { width: 18px; height: 18px; margin-right: 13px; color: #eaeded; }
.search em { margin-right: auto; }
.account { display: flex; align-items: center; gap: 21px; margin-left: auto; font-weight: 500; }
.menu { display: flex; align-items: center; gap: 7px; padding-top: 2px; }
.menu svg { width: 11px; height: 10px; }
.favorites { display: flex; align-items: center; gap: 23px; height: 38px; padding-left: 24px; font-weight: 500; }
.favorite { display: flex; align-items: center; gap: 6px; }

/* Console body */
.body { display: flex; height: 777px; background: #f2f3f3; font-size: 17.5px; }
.side { width: 329px; background: #fff; color: #545b64; }
.sidehead { display: flex; align-items: center; justify-content: space-between; height: 75px; border-bottom: 1px solid #eaeded; padding: 0 28px 0 38px; font-size: 22px; font-weight: 700; color: #16191f; }
.sidehead svg { width: 18px; height: 18px; }
.sidenav { padding: 13px 25px 0; }
.sidenav a { display: flex; align-items: center; height: 37.5px; padding: 0 0 1px 13px; }
.sidenav .current { color: #ec7211; font-weight: 700; }
hr { width: 279px; height: 1px; margin: 23px 0 32px; border: 0; background: #eaeded; }
.block { display: flex; flex-direction: column; align-items: flex-start; padding-left: 13px; margin-top: 33px; line-height: 25px; }
.group { display: flex; align-items: center; gap: 13px; height: 38px; margin: 19px 0 1px -10px; }
.group svg { width: 12px; height: 11px; }
.group.closed { margin-top: -8px; }
.closed svg { width: 11px; height: 13px; color: #879596; }
.spot { display: flex; align-items: center; gap: 12px; height: 25px; padding-left: 13px; }
.spot + hr { margin: 30px 0 33px; }
.badge { width: 27px; height: 25px; border-radius: 13px; background: #0073bb; color: #fff; font-size: 15px; font-weight: 500; line-height: 25px; text-align: center; }
.scrollbar { display: flex; flex-direction: column; align-items: center; width: 22px; background: #f0f0f0; border-right: 1px solid #c3c8c8; }
.up, .dn { width: 0; height: 0; border: 5px solid transparent; }
.up { margin-top: 4px; border-bottom-color: #a3a3a3; border-top-width: 4px; }
.thumb { width: 17px; height: 696px; margin-top: 8px; background: #c1c1c1; }
.dn { margin-top: 46px; border-top-color: #505050; }
.main { width: 1518px; padding: 31px 49px 0; }
.crumbs { display: flex; align-items: center; height: 26px; padding-left: 1px; color: #687078; }
.crumbs a, h1 a, .link, .name a { color: #0073bb; }
.crumbs svg { width: 18px; height: 18px; margin: 0 14px 0 12px; color: #16191f; }
h1 { display: flex; align-items: baseline; gap: 13px; height: 44px; margin: 35px 0 0 1px; font-size: 35px; font-weight: 400; line-height: 44px; }
h1 a { font-size: 15px; font-weight: 500; }
.pagetabs { display: flex; height: 57px; margin-top: 46px; padding-left: 3px; border-bottom: 1px solid #aab7b8; }
.pagetab { position: relative; height: 37px; padding: 0 24px 0 28px; border-right: 1px solid #aab7b8; font-weight: 600; line-height: 38px; color: #545b64; }
.pagetab:first-child { padding-left: 26px; }
.pagetab:last-child { border-right: 0; }
.pagetab.on { color: #ec7211; }
.pagetab.on::after { content: ""; position: absolute; left: 0; right: 0; top: 53px; height: 2px; background: #16191f; }
.card { width: 1420px; margin-top: 25px; border: 1px solid #d5dbdb; border-top-color: #eaeded; border-bottom: 2px solid #95a1a2; background: #fff; }
.cardhead { height: 245px; padding: 27px 54px 0 25px; border-bottom: 1px solid #eaeded; background: #fafafa; }
h2 { display: flex; gap: 6px; height: 30px; margin: 1px 0 9px 1px; font-size: 22.5px; font-weight: 700; line-height: 30px; }
.count { font-weight: 400; color: #687078; }
p { display: flex; align-items: center; gap: 4px; height: 25px; margin: 0 0 0 1px; font-size: 15px; color: #545b64; }
.link { font-weight: 700; }
p svg { width: 18px; height: 18px; margin: 0 2px 0 3px; color: #0073bb; }
.buttons { display: flex; height: 37px; margin-top: 13px; }
button { display: flex; align-items: center; justify-content: center; gap: 13px; margin: 0 12px 0 0; padding: 0; border: 1px solid #545b64; border-radius: 2px; background: #fff; font: 600 17.5px/34px "Noto Sans", sans-serif; color: #545b64; }
button svg { width: 18px; height: 18px; }
.off { border-color: #d5dbdb; color: #aab7b8; }
.refresh { width: 60px; margin-right: 13px; }
.refresh svg { width: 21px; height: 21px; }
.uri { width: 181px; padding-right: 3px; }
.url { width: 159px; margin-right: 13px; padding-right: 3px; }
.dl { width: 163px; margin-right: 13px; padding-right: 3px; }
.open { width: 124px; padding-left: 6px; gap: 12px; }
.del { width: 108px; padding-left: 2px; }
.actions { width: 141px; margin-right: 13px; padding-left: 4px; }
.actions svg { width: 13px; height: 12px; }
.create { width: 164px; padding-left: 2px; }
.upload { width: 139px; margin: 0; padding-right: 4px; border-color: #ec7211; background: #ec7211; color: #fff; }
.filters { display: flex; align-items: center; height: 40px; margin-top: 18px; }
.find { display: flex; align-items: center; gap: 13px; width: 583px; height: 40px; padding-left: 10px; border: 1px solid #aab7b8; border-radius: 2px; background: #fff; color: #aab7b8; }
.find svg { width: 18px; height: 18px; color: #687078; }
.toggle { width: 30px; height: 20px; margin: 0 14px 0 25px; padding: 2px; border-radius: 10px; background: #0073bb; }
.toggle i { display: block; width: 16px; height: 16px; margin-left: 10px; border-radius: 50%; background: #fff; }
.pager { display: flex; align-items: center; height: 37px; margin: -13px -26px 0 auto; font-size: 16px; color: #545b64; }
.pager > svg { width: 18px; height: 20px; }
.pager b { width: 56px; text-align: center; font-weight: 600; color: #16191f; }
.pager i { width: 1px; height: 37px; margin: 0 20px 0 18px; background: #eaeded; }
.pager .gear { width: 21px; height: 21px; }
.row { display: grid; grid-template-columns: 69px 251px 92px 372px 371px 105px 158px; align-items: center; height: 57px; border-bottom: 1px solid #eaeded; }
.row:last-child { border: 0; }
.row > div { padding-left: 25px; }
.stack { display: flex; flex-direction: column; align-items: flex-start; line-height: 25px; }
.check i { display: block; width: 18px; height: 18px; margin-bottom: 3px; border: 1px solid #aab7b8; border-radius: 2px; background: #fff; }
.head { height: 79px; background: #fafafa; font-weight: 600; color: #545b64; }
.head > div { display: flex; height: 38px; align-items: center; padding-left: 26px; border-right: 1px solid #eaeded; }
.head > .check { padding-left: 25px; }
.head > div:last-child { height: 50px; align-items: flex-start; border: 0; }
.head > .sorted { justify-content: space-between; padding-right: 24px; color: #16191f; }
.sorted svg { width: 13px; height: 12px; }
.row > .size { padding-left: 55px; }
.name a { display: flex; align-items: center; height: 25px; }
.name svg { width: 21px; height: 21px; margin: -1px 12px 0 -1px; }
.help { display: flex; justify-content: center; width: 51px; padding-top: 15px; border-left: 1px solid #c3c8c8; background: #fff; }

/* Console footer */
.foot { display: flex; align-items: center; height: 35px; padding: 3px 25px 0; border-top: 1px solid #545b64; background: #232f3e; color: #fff; font-size: 15px; font-weight: 500; }
.lang { margin: 0 7px 0 32px; }
.foot svg { width: 11px; height: 10px; margin-top: -2px; }
.legal { display: flex; margin-left: auto; }
.legal span { margin-left: 31px; }
.legal span:nth-child(2) { margin-left: 37px; }

/* Taskbar */
.taskbar { display: flex; height: 50px; background: #441206; color: #fff; font-family: "Open Sans", "Noto Sans", sans-serif; }
.start { display: grid; place-items: center; width: 60px; }
.tasksearch { display: flex; align-items: center; gap: 15px; width: 430px; padding-left: 14px; border: 1px solid #8a675f; background: #6b4238; font-size: 18.5px; color: #e2d5d2; }
.view { display: grid; place-items: center; width: 64px; padding-right: 4px; }
.apps { display: flex; }
.app { display: grid; place-items: center; width: 62px; height: 50px; padding: 0 2px 1px 0; }
.app svg { width: 29px; height: 29px; }
.focused { background: linear-gradient(#f6b4a4, #f6b4a4) 0 100% / 100% 3px no-repeat #5f1c0d; }
.open.app { background: linear-gradient(#f6b4a4, #f6b4a4) 40% 100% / 51px 3px no-repeat; }
.tray { display: flex; align-items: center; margin-left: auto; border-right: 1px solid #7d5a51; margin-right: 5px; font-size: 14.5px; }
.tray > svg { width: 18px; height: 18px; margin-right: 10px; }
.tray > .trayUp { width: 17px; height: 17px; }
.tray > .mic { width: 20px; height: 20px; margin-right: 12px; }
.tray > .battery, .tray > .volume { width: 21px; height: 21px; margin-right: 9px; }
.tray > .pen { width: 22px; height: 22px; margin: 0 16px 0 5px; }
.clock { display: flex; flex-direction: column; align-items: center; width: 76px; margin: 0 23px 0 17px; line-height: 23px; }
.notice { position: relative; margin-right: 26px; }
.notice svg { width: 19px; height: 19px; }
.notice b { position: absolute; left: 9px; top: 9px; width: 20px; height: 20px; border: 1px solid #a3837b; border-radius: 50%; background: #5a2c22; text-align: center; font-size: 12px; line-height: 18px; }
</style>
